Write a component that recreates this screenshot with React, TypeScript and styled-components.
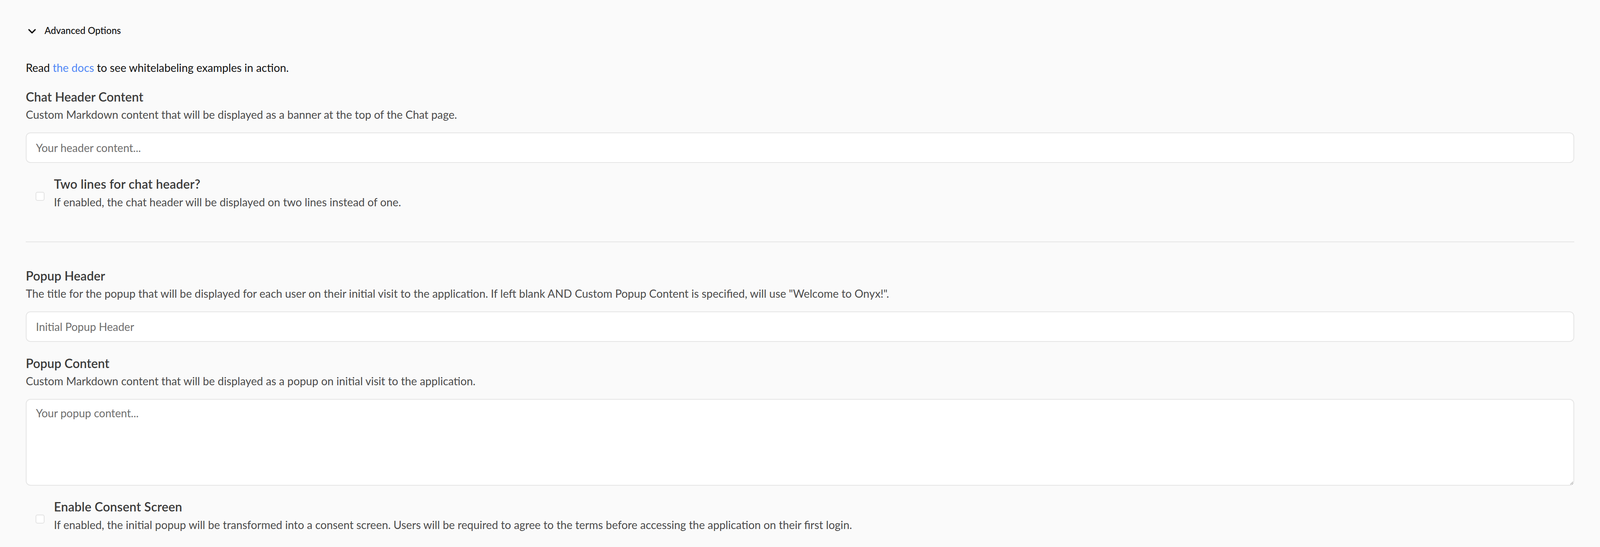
import React from "react";
import styled, { createGlobalStyle } from "styled-components";

const GlobalStyle = createGlobalStyle`
  html, body {
    margin: 0;
    padding: 0;
    background: #fafafa;
  }
  body {
    font-family: Lato, "Noto Sans", sans-serif;
    -webkit-font-smoothing: antialiased;
  }
  * { box-sizing: border-box; }
`;

const Page = styled.main`
  min-height: 100vh;
  padding: 60px 66px 0;
  background: #fafafa;
  display: flex;
  flex-direction: column;
`;

const Toggle = styled.button`
  align-self: flex-start;
  display: flex;
  align-items: center;
  gap: 16px;
  height: 36px;
  padding: 0;
  border: 0;
  background: none;
  cursor: pointer;
  font-family: inherit;
  font-weight: 500;
  font-size: 24px;
  line-height: 36px;
  color: #111111;
`;

const Chevron = styled.svg`
  width: 32px;
  height: 32px;
  margin-top: 3px;
  flex-shrink: 0;
`;

const Intro = styled.p`
  margin: 57px 0 0;
  font-size: 28.3px;
  line-height: 40px;
  font-weight: 400;
  color: #111111;
`;

const DocLink = styled.a`
  color: #4f87f6;
  text-decoration: none;
`;

const Field = styled.section<{ $gap: number }>`
  display: flex;
  flex-direction: column;
  margin-top: ${(p) => p.$gap}px;
`;

const FieldTitle = styled.h3`
  align-self: flex-start;
  margin: 0;
  font-size: 32px;
  line-height: 44px;
  font-weight: 600;
  color: #3b3b3b;
`;

const FieldDesc = styled.p`
  align-self: flex-start;
  margin: 3px 0 0;
  font-size: 28.3px;
  line-height: 40px;
  font-weight: 400;
  color: #4b4b4b;
`;

const TextInput = styled.input`
  margin: 26px 0 0;
  width: 100%;
  height: 78px;
  padding: 0 24px;
  border: 2px solid #e5e5e5;
  border-radius: 12px;
  background: #ffffff;
  font-family: inherit;
  font-size: 28px;
  color: #222222;
  outline: none;
  &::placeholder {
    color: #6e6e6e;
  }
`;

const TextArea = styled.textarea`
  display: block;
  margin: 26px 0 0;
  width: 100%;
  height: 222px;
  padding: 14px 24px;
  border: 2px solid #e5e5e5;
  border-radius: 12px;
  background: #ffffff;
  font-family: inherit;
  font-size: 28px;
  line-height: 40px;
  color: #222222;
  outline: none;
  resize: vertical;
  &::placeholder {
    color: #6e6e6e;
  }
`;

const CheckRow = styled.label`
  display: flex;
  align-items: flex-start;
  gap: 24px;
  margin-top: 32px;
  padding-left: 25px;
  cursor: pointer;
`;

const Box = styled.span`
  flex-shrink: 0;
  width: 23px;
  height: 23px;
  margin-top: 42px;
  border: 2px solid #e3e3e3;
  border-radius: 5px;
  background: #ffffff;
`;

const CheckText = styled.div`
  display: flex;
  flex-direction: column;
  align-items: flex-start;
`;

const CheckTitle = styled.span`
  font-size: 32px;
  line-height: 44px;
  font-weight: 600;
  letter-spacing: 0.2px;
  color: #3a3a3a;
`;

const CheckDesc = styled.span`
  margin-top: 4px;
  font-size: 28.3px;
  line-height: 40px;
  font-weight: 400;
  color: #4b4b4b;
`;

const Divider = styled.hr`
  margin: 81px 0 0;
  border: 0;
  height: 2px;
  background: #e5e5e5;
`;

function Checkbox({ title, desc }: { title: string; desc: string }) {
  return (
    <CheckRow>
      <Box />
      <CheckText>
        <CheckTitle>{title}</CheckTitle>
        <CheckDesc>{desc}</CheckDesc>
      </CheckText>
    </CheckRow>
  );
}

export default function App() {
  return (
    <>
      <GlobalStyle />
      <Page>
        <Toggle type="button">
          <Chevron viewBox="0 0 24 24" fill="none" stroke="#111111" strokeWidth={2.4} strokeLinecap="round" strokeLinejoin="round">
            <path d="m6 9 6 6 6-6" />
          </Chevron>
          Advanced Options
        </Toggle>

        <Intro>
          Read <DocLink href="#">the docs</DocLink> to see whitelabeling examples in action.
        </Intro>

        <Field $gap={33}>
          <FieldTitle>Chat Header Content</FieldTitle>
          <FieldDesc>Custom Markdown content that will be displayed as a banner at the top of the Chat page.</FieldDesc>
          <TextInput placeholder="Your header content..." />
        </Field>

        <Checkbox
          title="Two lines for chat header?"
          desc="If enabled, the chat header will be displayed on two lines instead of one."
        />

        <Divider />

        <Field $gap={64}>
          <FieldTitle>Popup Header</FieldTitle>
          <FieldDesc>
            The title for the popup that will be displayed for each user on their initial visit to the application. If left blank AND Custom Popup Content is specified, will use "Welcome to Onyx!".
          </FieldDesc>
          <TextInput placeholder="Initial Popup Header" />
        </Field>

        <Field $gap={33}>
          <FieldTitle>Popup Content</FieldTitle>
          <FieldDesc>Custom Markdown content that will be displayed as a popup on initial visit to the application.</FieldDesc>
          <TextArea placeholder="Your popup content..." />
        </Field>

        <Checkbox
          title="Enable Consent Screen"
          desc="If enabled, the initial popup will be transformed into a consent screen. Users will be required to agree to the terms before accessing the application on their first login."
        />
      </Page>
    </>
  );
}
